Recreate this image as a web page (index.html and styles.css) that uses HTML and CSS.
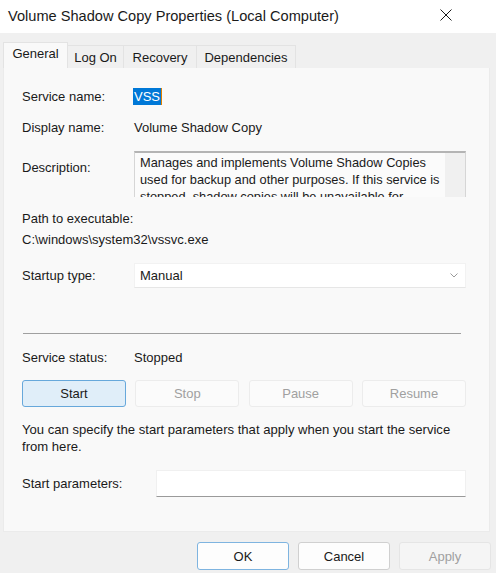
FILE: index.html
```html
<!DOCTYPE html>
<html lang="en">
<head>
<meta charset="utf-8">
<title>Volume Shadow Copy Properties (Local Computer)</title>
<link rel="stylesheet" href="styles.css">
</head>
<body>
<div class="titlebar">
  <span class="title">Volume Shadow Copy Properties (Local Computer)</span>
  <svg class="close" width="12" height="12" viewBox="0 0 12 12"><path d="M0.5 0.5L11.5 11.5M11.5 0.5L0.5 11.5" stroke="#1a1a1a" stroke-width="1"/></svg>
</div>
<div class="dialog">
  <div class="tabs">
    <div class="tab active t-general">General</div>
    <div class="tab t-logon">Log On</div>
    <div class="tab t-recovery">Recovery</div>
    <div class="tab t-deps">Dependencies</div>
  </div>
  <div class="panel">
    <div class="row r-name">
      <span class="label">Service name:</span>
      <span class="sel">VSS</span>
    </div>
    <div class="row r-display">
      <span class="label">Display name:</span>
      <span>Volume Shadow Copy</span>
    </div>
    <div class="row r-desc">
      <span class="label desc-label">Description:</span>
      <div class="descbox">
        <div class="desctext">Manages and implements Volume Shadow Copies used for backup and other purposes. If this service is stopped, shadow copies will be unavailable for backup and the backup may fail.</div>
        <div class="scroll"></div>
      </div>
    </div>
    <div class="path-label">Path to executable:</div>
    <div class="path">C:\windows\system32\vssvc.exe</div>
    <div class="row r-startup">
      <span class="label">Startup type:</span>
      <div class="combo">
        <span>Manual</span>
        <svg width="8" height="5" viewBox="0 0 8 5"><path d="M0.5 0.5L4 4L7.5 0.5" fill="none" stroke="#9a9a9a" stroke-width="1"/></svg>
      </div>
    </div>
    <div class="sep"></div>
    <div class="row r-status">
      <span class="label">Service status:</span>
      <span>Stopped</span>
    </div>
    <div class="svc-buttons">
      <button class="btn primary">Start</button>
      <button class="btn off">Stop</button>
      <button class="btn off">Pause</button>
      <button class="btn off">Resume</button>
    </div>
    <p class="note">You can specify the start parameters that apply when you start the service from here.</p>
    <div class="row r-params">
      <span class="label params-label">Start parameters:</span>
      <div class="input"></div>
    </div>
  </div>
  <div class="footer">
    <button class="btn fbtn default">OK</button>
    <button class="btn fbtn">Cancel</button>
    <button class="btn fbtn off">Apply</button>
  </div>
</div>
</body>
</html>
```
FILE: styles.css
```css
html, body {
  margin: 0;
  padding: 0;
}
body {
  width: 496px;
  height: 573px;
  overflow: hidden;
  font-family: "Liberation Sans", Arial, sans-serif;
  font-size: 13px;
  color: #1a1a1a;
  background: #f0f0f0;
}
.titlebar {
  height: 33px;
  background: #ffffff;
  display: flex;
  align-items: center;
  justify-content: space-between;
  padding: 0 44px 0 8px;
}
.title {
  font-size: 14.6px;
  margin-top: -2px;
}
.close {
  margin-top: -3px;
}
.dialog {
  background: #f0f0f0;
  height: 540px;
}
.tabs {
  display: flex;
  padding: 10px 0 0 3px;
  align-items: flex-end;
  height: 25px;
}
.tab {
  height: 23px;
  line-height: 23px;
  text-align: center;
  border: 1px solid #e3e3e3;
  border-bottom: none;
  border-left: none;
  background: #f0f0f0;
  box-sizing: border-box;
}
.tab.active {
  height: 26px;
  line-height: 22px;
  background: #f9f9f9;
  border-left: 1px solid #e3e3e3;
}
.t-general { width: 65px; }
.t-logon { width: 56px; }
.t-recovery { width: 73px; }
.t-deps { width: 99px; }
.panel {
  margin: 0 6px 0 3px;
  height: 464px;
  box-sizing: border-box;
  background: #f9f9f9;
  border: 1px solid #ebebeb;
  border-top: none;
  padding: 20px 23px 0 18px;
}
.row {
  display: flex;
  align-items: center;
  line-height: 17px;
}
.label {
  width: 112px;
  flex: none;
}
.sel {
  background: #0078d7;
  color: #ffffff;
  padding: 0 1px;
  margin-left: -1px;
  border-right: 1px solid #e08000;
}
.r-display {
  margin-top: 14px;
}
.r-desc {
  margin-top: 15px;
  align-items: flex-start;
}
.desc-label {
  margin-top: 8px;
}
.descbox {
  flex: 1;
  height: 46px;
  box-sizing: border-box;
  border: 1px solid #d6d6d6;
  border-top: 2px solid #b4b4b4;
  border-bottom: none;
  background: #fbfbfb;
  display: flex;
  overflow: hidden;
}
.desctext {
  flex: 1;
  padding: 1px 0 0 5px;
  line-height: 17px;
  font-size: 12.8px;
}
.scroll {
  width: 20px;
  background: #f0f0f0;
}
.path-label {
  margin-top: 13px;
  line-height: 17px;
}
.path {
  margin-top: 4px;
  line-height: 17px;
}
.r-startup {
  margin-top: 15px;
}
.combo {
  flex: 1;
  height: 25px;
  box-sizing: border-box;
  background: #ffffff;
  border: 1px solid #f2f2f2;
  border-bottom: 1px solid #e6e6e6;
  display: flex;
  align-items: center;
  justify-content: space-between;
  padding: 0 7px 0 5px;
}
.sep {
  margin: 45px 5px 0 1px;
  border-top: 1px solid #a0a0a0;
}
.r-status {
  margin-top: 15px;
}
.svc-buttons {
  display: flex;
  justify-content: space-between;
  margin-top: 14px;
}
.btn {
  font-family: inherit;
  font-size: 13px;
  height: 27px;
  box-sizing: border-box;
  border: 1px solid #d0d0d0;
  border-radius: 3px;
  background: #fdfdfd;
  color: #1a1a1a;
  padding: 0;
}
.svc-buttons .btn {
  width: 104px;
}
.btn.primary {
  background: #e0eef9;
  border-color: #67a8db;
}
.btn.off {
  color: #a0a0a0;
  background: #fbfbfb;
  border-color: #ececec;
}
.note {
  margin: 14px 0 0 0;
  line-height: 17px;
  font-size: 13.1px;
}
.r-params {
  margin-top: 15px;
}
.params-label {
  width: 134px;
}
.input {
  flex: 1;
  height: 27px;
  box-sizing: border-box;
  background: #ffffff;
  border: 1px solid #f0f0f0;
  border-bottom: 1px solid #9a9a9a;
}
.footer {
  display: flex;
  justify-content: flex-end;
  gap: 9px;
  padding: 10px 5px 0 0;
}
.fbtn {
  width: 92px;
  height: 28px;
}
.fbtn.default {
  border-color: #7eb4e0;
}
.fbtn.off {
  background: #f5f5f5;
  border-color: #e5e5e5;
}
```
